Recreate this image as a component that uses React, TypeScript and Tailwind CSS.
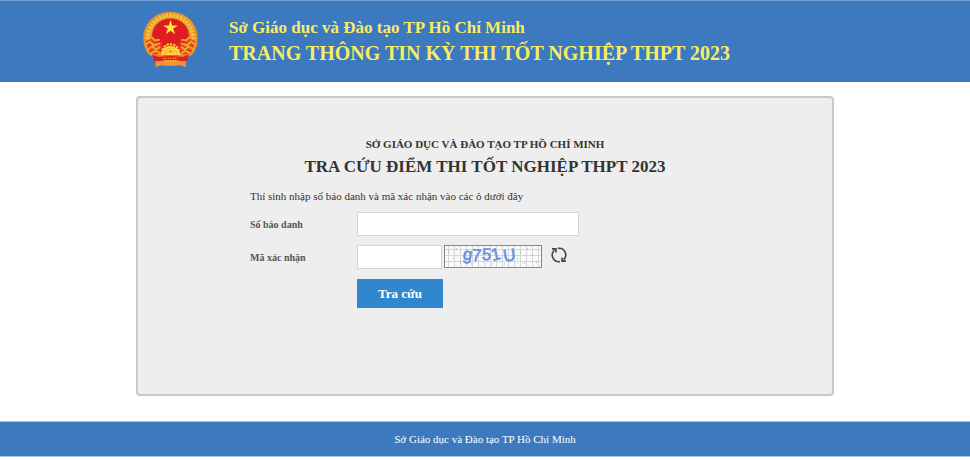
import type { ReactNode } from "react";

const wheatAngles = [-126, -117, -108, -99, -90, -81, -72, -63, -54, -45, -36, -27, -18, -9, 0, 9, 18, 27, 36, 45, 54, 63, 72, 81, 90, 99, 108, 117, 126];

function Emblem() {
  return (
    <svg viewBox="40 34 164 170" className="h-[57px] w-[55px] shrink-0" role="img" aria-label="Quốc huy">
      <path
        d="M122 36C76 36 41 70 41 115c0 21 6 38 17 50l20 8 0 28 15-5 29 2 29-2 16 5v-28l19-8c11-12 17-29 17-50 0-45-35-79-81-79Z"
        fill="#e8932a"
      />
      <path d="M122 56c-32 0-55 24-55 53 0 24 13 43 31 54h48c18-11 31-30 31-54 0-29-23-53-55-53Z" fill="#e01b22" />
      {wheatAngles.map((angle) => (
        <g key={angle} transform={`rotate(${angle} 122 115)`}>
          <path d="M117 56l1-13 4-4 4 4 1 13-5-4Z" fill="#f0b838" />
          <path d="M122 43v8" stroke="#f9d95a" strokeWidth="2" />
        </g>
      ))}
      <path d="m122 61 5 16h17l-14 10 6 16-14-10-14 10 6-16-14-10h17Z" fill="#ffe93a" />
      <path d="M47 124l18-7 18 13 14-5-3 25-12 14-21-4Z" fill="#e3401f" />
      <path d="M197 124l-18-7-18 13-14-5 3 25 12 14 21-4Z" fill="#e3401f" />
      <path
        d="M48 134l13-9 12 12 17-7M53 150l14-10 12 9 12-8M62 161l15-8 12 5M66 112l9 10 15-2M196 134l-13-9-12 12-17-7M191 150l-14-10-12 9-12-8M182 161l-15-8-12 5M178 112l-9 10-15-2"
        fill="none"
        stroke="#f2a42b"
        strokeWidth="6"
      />
      <path d="M94 166a28 28 0 1 1 56 0Z" fill="#ffd634" />
      <circle cx="122" cy="159" r="26" fill="none" stroke="#ffd634" strokeWidth="6" strokeDasharray="7 3" />
      <path d="M103 165a19 20 0 0 1 38 0M110 165a12 12 0 0 1 24 0" fill="none" stroke="#eda52a" strokeWidth="2" />
      <circle cx="122" cy="155" r="4" fill="#e98f22" />
      <path d="M67 162l20 7q35-8 70 0l20-7-6 21-16 1q-33-7-66 0l-16-1Z" fill="#e01b22" />
      <path d="M68 163l19 7q35-8 70 0l19-7M78 184l12 1q32-7 64 0l12-1" fill="none" stroke="#f09a2b" strokeWidth="2" />
      <path d="M100 176q22-3 44 0" fill="none" stroke="#f09a2b" strokeWidth="4" strokeDasharray="4 3" />
      <path d="M78 186l15 1 29-3 29 3 16-1v15l-16-7-29 2-29-2-15 7Z" fill="#f3962f" />
    </svg>
  );
}

function Captcha() {
  return (
    <svg viewBox="0 0 98 23" className="h-[23px] w-[98px] self-start overflow-visible" role="img" aria-label="Mã xác nhận">
      <defs>
        <pattern id="grid" width="6" height="6" patternUnits="userSpaceOnUse">
          <path d="M0 4.500h6M4.500 0v6" stroke="#d6d6d8" />
        </pattern>
      </defs>
      <rect width="98" height="23" fill="#fafafa" />
      <rect width="98" height="23" fill="url(#grid)" />
      <path
        d="M4 7h1M12 4h1M9 13h1M16 18h1M34 5h1M48 19h1M60 19h1M73 14h1M76 7h1M83 4h1M88 10h1M92 17h1M80 18h1M27 19h1"
        stroke="#8c9bd5"
      />
      <g fill="#6592df" stroke="#6592df" strokeWidth="0.5" fontSize="17" className="font-['Liberation_Sans',Arial,sans-serif]">
        <text x="19" y="15" transform="rotate(8 24 10)">g</text>
        <text x="28" y="16" transform="rotate(4 33 9)">7</text>
        <text x="38" y="15" transform="rotate(4 42 9)">5</text>
        <text x="47" y="15" transform="rotate(-14 52 9)">1</text>
        <text x="59" y="16" transform="rotate(-8 65 9)">U</text>
      </g>
      <rect x="0.500" y="0.500" width="97" height="22" fill="none" stroke="#888" />
    </svg>
  );
}

function RefreshIcon() {
  return (
    <svg viewBox="0 0 16 16" className="size-4" fill="none" stroke="#454545" strokeWidth="1.600" aria-hidden="true">
      <path d="M7 1.400A6.700 6.700 0 0 1 12.500 13" />
      <path d="M9 14.600A6.700 6.700 0 0 1 3.500 3" />
      <path d="M1 1.900h4v3.600M15 14.100h-4v-3.600" />
    </svg>
  );
}

function Row({ id, label, children }: { id: string; label: string; children: ReactNode }) {
  return (
    <div className="flex items-center">
      <label htmlFor={id} className="w-[107px] shrink-0 text-[10px] font-bold text-[#555]">
        {label}
      </label>
      {children}
    </div>
  );
}

export default function App() {
  return (
    <div className="bg-white font-['Liberation_Serif','Times_New_Roman',serif] text-[#333]">
      <header className="border-t border-[#6f9dd2] bg-[#3d79bf] pt-[10px] pb-[14px]">
        <div className="mx-auto flex max-w-[698px] items-start gap-[31px] px-[7px]">
          <Emblem />
          <div className="pt-[5px] font-bold text-[#f8ed62]">
            <p className="text-[17px] leading-6">Sở Giáo dục và Đào tạo TP Hồ Chí Minh</p>
            <p className="text-[20px] leading-[26px]">TRANG THÔNG TIN KỲ THI TỐT NGHIỆP THPT 2023</p>
          </div>
        </div>
      </header>

      <main className="mx-auto mt-[14px] mb-[25px] max-w-[698px] rounded-[4px] border-2 border-[#c9c9c9] bg-[#eee] pt-9 pb-[86px]">
        <div className="text-center font-bold">
          <h2 className="text-[11px] leading-5">SỞ GIÁO DỤC VÀ ĐÀO TẠO TP HỒ CHÍ MINH</h2>
          <h1 className="text-[17px] leading-[26px]">TRA CỨU ĐIỂM THI TỐT NGHIỆP THPT 2023</h1>
        </div>
        <form className="pl-28" onSubmit={(e) => e.preventDefault()}>
          <p className="mt-[6px] text-[11px] leading-5">Thí sinh nhập số báo danh và mã xác nhận vào các ô dưới đây</p>
          <div className="mt-[6px] flex flex-col gap-[9px]">
            <Row id="sbd" label="Số báo danh">
              <input id="sbd" type="text" className="h-6 w-[222px] border border-[#d4d4d4] bg-white px-2 text-[11px]" />
            </Row>
            <Row id="code" label="Mã xác nhận">
              <input id="code" type="text" className="mr-[2px] h-6 w-[85px] border border-[#d4d4d4] bg-white px-2 text-[11px]" />
              <Captcha />
              <button type="button" aria-label="Đổi mã xác nhận" className="mt-[2px] ml-[9px] self-start">
                <RefreshIcon />
              </button>
            </Row>
          </div>
          <button type="submit" className="mt-[10px] ml-[107px] h-[29px] w-[86px] bg-[#3087ce] text-[13px] font-bold text-white">
            Tra cứu
          </button>
        </form>
      </main>

      <footer className="border-y border-[#a9c4e4] bg-[#3d79bf] py-[7px] text-center text-[11px] leading-5 text-white">
        Sở Giáo dục và Đào tạo TP Hồ Chí Minh
      </footer>
    </div>
  );
}
